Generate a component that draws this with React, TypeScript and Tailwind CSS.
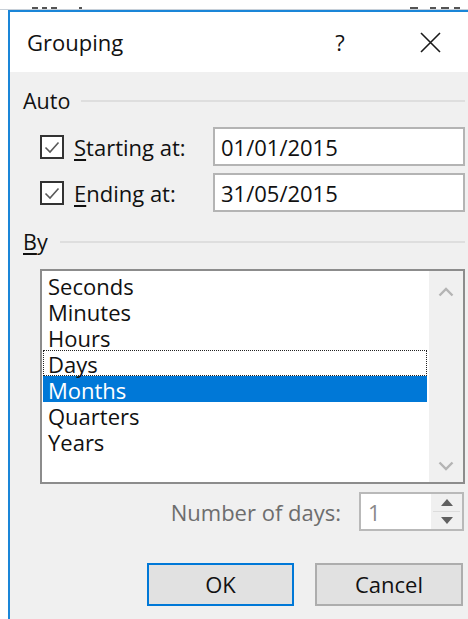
import React from "react";

const font = { fontFamily: "'Open Sans', 'Noto Sans', sans-serif" };

// first letter underlined, like a Windows access key
function AccessKey({ text }: { text: string }) {
  return (
    <span>
      <span className="underline underline-offset-[3px] decoration-[1.5px]">{text[0]}</span>
      {text.slice(1)}
    </span>
  );
}

function GroupHeader({ children, gap }: { children: React.ReactNode; gap: string }) {
  return (
    <div className="flex items-center h-[24px]">
      <span className="text-[21.5px] leading-[24px] text-[#111]">{children}</span>
      <div className={`flex-1 h-[2px] bg-[#dedede] ${gap}`} />
    </div>
  );
}

function CheckBox() {
  return (
    <div className="w-[24px] h-[24px] border-2 border-[#333] bg-white flex items-center justify-center shrink-0">
      <svg width="18" height="18" viewBox="0 0 18 18">
        <path d="M2.5 9.5 L7 14 L15.5 4.5" fill="none" stroke="#5a5a5a" strokeWidth="1.6" />
      </svg>
    </div>
  );
}

function DateRow({ label, value }: { label: string; value: string }) {
  return (
    <div className="flex items-center h-[39px] pl-[30px]">
      <div className="flex items-center w-[173px] shrink-0">
        <CheckBox />
        <span className="ml-[10px] text-[22px] leading-[28px] text-[#111]">
          <AccessKey text={label} />
        </span>
      </div>
      <div className="flex-1 h-[39px] border-2 border-[#b4b4b4] bg-white flex items-center pl-[6px] text-[22px] leading-[28px] text-[#111]">
        {value}
      </div>
    </div>
  );
}

const units = ["Seconds", "Minutes", "Hours", "Days", "Months", "Quarters", "Years"];

function Chevron({ up }: { up?: boolean }) {
  return (
    <svg width="16" height="10" viewBox="0 0 16 10">
      <path
        d={up ? "M1.5 8.5 L8 2 L14.5 8.5" : "M1.5 1.5 L8 8 L14.5 1.5"}
        fill="none"
        stroke="#b4b4b4"
        strokeWidth="2.4"
      />
    </svg>
  );
}

export default function App() {
  return (
    <div style={font} className="w-[468px] h-[619px] bg-white overflow-hidden flex flex-col">
      {/* sliver of the sheet behind the dialog */}
      <div className="h-[10px] flex items-end shrink-0 border-b border-[#c8d0d8]">
        <div className="flex gap-[4px] ml-[32px]">
          <span className="w-[6px] h-[2px] bg-[#555]" />
          <span className="w-[5px] h-[2px] bg-[#555]" />
          <span className="w-[6px] h-[2px] bg-[#555]" />
        </div>
        <span className="ml-[22px] w-[3px] h-[2px] bg-[#555]" />
        <div className="flex gap-[5px] ml-auto mr-[8px]">
          <span className="w-[8px] h-[2px] bg-[#555]" />
          <span className="w-[2px] h-[2px] bg-transparent" />
          <span className="w-[6px] h-[2px] bg-[#555]" />
          <span className="w-[8px] h-[2px] bg-[#555]" />
          <span className="w-[6px] h-[2px] bg-[#555]" />
        </div>
      </div>

      <div className="ml-[8px] flex-1 flex flex-col border-l-2 border-t-2 border-[#1a86d8]">
        {/* title bar */}
        <div className="h-[60px] bg-white flex items-center pl-[17px] shrink-0">
          <span className="text-[22px] text-[#111]">Grouping</span>
          <span className="ml-auto w-[46px] text-center text-[22px] text-[#111]">?</span>
          <div className="ml-[44px] mr-[15px] w-[46px] flex justify-center">
            <svg width="21" height="21" viewBox="0 0 21 21">
              <path d="M1 1 L20 20 M20 1 L1 20" stroke="#1a1a1a" strokeWidth="1.6" />
            </svg>
          </div>
        </div>

        {/* dialog body */}
        <div className="flex-1 bg-[#f0f0f0] pl-[13px] pr-[3px] flex flex-col">
          <div className="mt-[17px]">
            <GroupHeader gap="ml-[11px]">Auto</GroupHeader>
          </div>
          <div className="mt-[14px] -ml-[13px]">
            <DateRow label="Starting at:" value="01/01/2015" />
          </div>
          <div className="mt-[7px] -ml-[13px]">
            <DateRow label="Ending at:" value="31/05/2015" />
          </div>
          <div className="mt-[18px]">
            <GroupHeader gap="ml-[12px]">
              <AccessKey text="By" />
            </GroupHeader>
          </div>

          {/* unit list */}
          <div className="mt-[15px] ml-[17px] h-[215px] border-2 border-[#8c8c8c] bg-white flex">
            <div className="flex-1 pl-px pt-px pr-[2px]">
              {units.map((u) => (
                <div
                  key={u}
                  className={`h-[26px] flex items-center pl-[4px] pt-[2px] text-[22px] leading-[22px] ${
                    u === "Months"
                      ? "bg-[#0078d7] text-white border border-[#0078d7]"
                      : u === "Days"
                      ? "border border-dotted border-[#222] text-[#111]"
                      : "border border-transparent text-[#111]"
                  }`}
                >
                  {u}
                </div>
              ))}
            </div>
            <div className="w-[34px] bg-[#f0f0f0] flex flex-col items-center justify-between pt-[16px] pb-[11px]">
              <Chevron up />
              <Chevron />
            </div>
          </div>

          {/* number of days */}
          <div className="mt-[8px] flex items-center justify-end pr-px">
            <span className="text-[22px] leading-[28px] text-[#6d6d6d] mr-[18px]">Number of days:</span>
            <div className="w-[105px] h-[39px] border-2 border-[#b9b9b9] bg-[#f0f0f0] flex">
              <div className="w-[70px] bg-white flex items-center pl-[7px] text-[22px] leading-[28px] text-[#8a8a8a]">1</div>
              <div className="flex-1 flex flex-col ml-[2px] mr-[2px]">
                <div className="flex-1 flex items-center justify-center border-b border-[#dcdcdc]">
                  <svg width="12" height="7" viewBox="0 0 12 7">
                    <path d="M0 7 L6 0 L12 7 Z" fill="#606060" />
                  </svg>
                </div>
                <div className="flex-1 flex items-center justify-center">
                  <svg width="12" height="7" viewBox="0 0 12 7">
                    <path d="M0 0 L12 0 L6 7 Z" fill="#606060" />
                  </svg>
                </div>
              </div>
            </div>
          </div>

          {/* buttons */}
          <div className="mt-[32px] flex justify-end gap-[21px] pr-[2px]">
            <button className="w-[147px] h-[43px] border-2 border-[#0078d7] bg-[#e1e1e1] text-[22px] text-[#111]">
              OK
            </button>
            <button className="w-[148px] h-[43px] border-2 border-[#adadad] bg-[#e1e1e1] text-[22px] text-[#111]">
              Cancel
            </button>
          </div>
        </div>
      </div>
    </div>
  );
}
